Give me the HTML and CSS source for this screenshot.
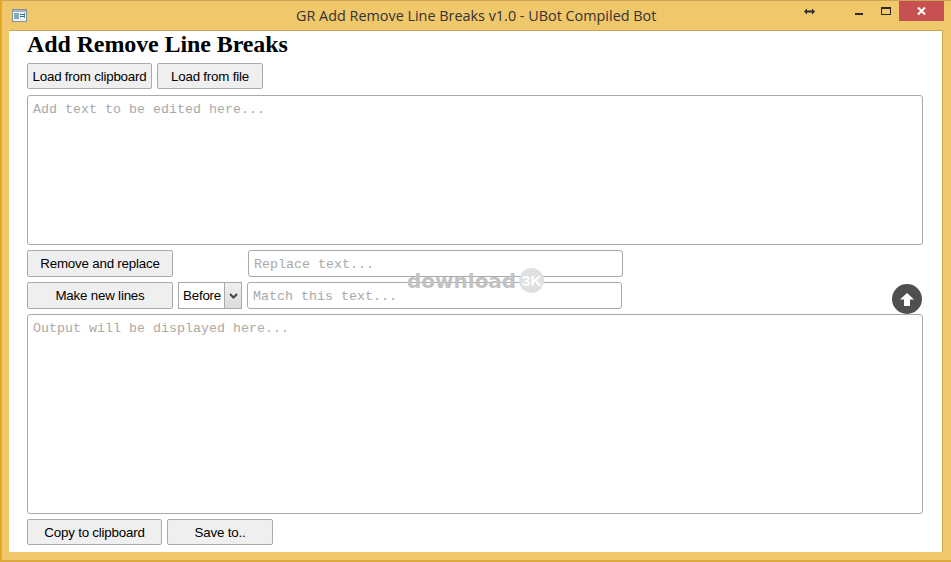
FILE: index.html
```html
<!DOCTYPE html>
<html lang="en">
<head>
    <meta charset="UTF-8">
    <title>GR Add Remove Line Breaks v1.0 - UBot Compiled Bot</title>
    <link rel="stylesheet" href="styles.css">
</head>
<body>
    <div class="window">
        <div class="titlebar">
            <svg class="app-icon" width="15" height="13" viewBox="0 0 15 13">
                <rect x="0.5" y="0.5" width="14" height="12" fill="#eef2f6" stroke="#8b8f98"/>
                <rect x="1" y="1" width="13" height="2" fill="#9fb2c8"/>
                <rect x="2" y="4" width="5" height="6" fill="#7fb0ba"/>
                <rect x="8" y="5" width="5" height="1" fill="#56606e"/>
                <rect x="8" y="7" width="5" height="1" fill="#56606e"/>
                <rect x="12" y="4" width="1" height="5" fill="#3f9a9a"/>
            </svg>
            <div class="title">GR Add Remove Line Breaks v1.0 - UBot Compiled Bot</div>
            <div class="win-controls">
                <svg class="resize-icon" width="11" height="7" viewBox="0 0 11 7">
                    <path d="M0 3.5 L3 0.5 V2.5 H8 V0.5 L11 3.5 L8 6.5 V4.5 H3 V6.5 Z" fill="#2b2b2b"/>
                </svg>
                <span class="min-btn"></span>
                <span class="max-btn"></span>
                <span class="close-btn">
                    <svg width="9" height="8" viewBox="0 0 9 8">
                        <path d="M1 0.5 L8 7.5 M8 0.5 L1 7.5" stroke="#fff" stroke-width="2" fill="none"/>
                    </svg>
                </span>
            </div>
        </div>
        <div class="client">
            <h1>Add Remove Line Breaks</h1>
            <div class="row row-top">
                <button class="btn btn-load-clip">Load from clipboard</button>
                <button class="btn btn-load-file">Load from file</button>
            </div>
            <textarea class="box box-input" placeholder="Add text to be edited here..."></textarea>
            <div class="row row-replace">
                <button class="btn btn-wide">Remove and replace</button>
                <input class="field field-replace" type="text" placeholder="Replace text...">
            </div>
            <div class="row row-match">
                <button class="btn btn-wide">Make new lines</button>
                <div class="select">
                    <span class="select-value">Before</span>
                    <span class="select-arrow">
                        <svg width="9" height="6" viewBox="0 0 9 6">
                            <path d="M1 1 L4.5 4.5 L8 1" stroke="#444" stroke-width="2" fill="none"/>
                        </svg>
                    </span>
                </div>
                <input class="field" type="text" placeholder="Match this text...">
            </div>
            <textarea class="box box-output" placeholder="Output will be displayed here..."></textarea>
            <div class="row row-bottom">
                <button class="btn btn-copy">Copy to clipboard</button>
                <button class="btn btn-save">Save to..</button>
            </div>
            <div class="watermark">
                <span class="watermark-text">download</span>
                <span class="watermark-badge">3K</span>
            </div>
            <div class="up-button">
                <svg width="14" height="13" viewBox="0 0 14 13">
                    <path d="M7 0 L14 6.5 H10 V13 H4 V6.5 H0 Z" fill="#fff"/>
                </svg>
            </div>
        </div>
    </div>
</body>
</html>
```

FILE: styles.css
```css
* {
    box-sizing: border-box;
}
html, body {
    margin: 0;
    padding: 0;
}
body {
    width: 951px;
    height: 562px;
    overflow: hidden;
    background: #fff;
    font-family: "Liberation Sans", Arial, sans-serif;
}
.window {
    width: 951px;
    height: 562px;
    padding: 0 8px 8px 7px;
    background: #f0c76a;
    border-top: 1px solid #c9a656;
    border-left: 2px solid #e3a925;
    border-bottom: 2px solid #d9a93f;
    display: flex;
    flex-direction: column;
}
.titlebar {
    height: 29px;
    flex: none;
    display: flex;
    align-items: center;
    position: relative;
}
.app-icon {
    margin: 0 0 0 3px;
}
.title {
    position: absolute;
    left: 287px;
    top: 5px;
    font-family: "Open Sans", "Liberation Sans", sans-serif;
    font-size: 14.4px;
    line-height: 20px;
    color: #333;
    white-space: nowrap;
}
.win-controls {
    margin-left: auto;
    height: 100%;
    display: flex;
    align-items: flex-start;
    margin-right: -1px;
}
.resize-icon {
    margin: 7px 40px 0 0;
}
.min-btn {
    width: 8px;
    height: 2px;
    margin: 12px 18px 0 0;
    background: #2b2b2b;
}
.max-btn {
    width: 10px;
    height: 8px;
    margin: 6px 8px 0 0;
    border: 1px solid #2b2b2b;
    border-top-width: 2px;
}
.close-btn {
    width: 45px;
    height: 20px;
    background: #c75050;
    display: flex;
    align-items: center;
    justify-content: center;
}
.client {
    flex: 1;
    position: relative;
    background: #fff;
    border-top: 1px solid #c9a656;
    border-right: 1px solid #c9a656;
    padding: 0 0 0 18px;
    display: flex;
    flex-direction: column;
    align-items: flex-start;
}
h1 {
    margin: 0;
    height: 32px;
    font-family: "Liberation Serif", "Times New Roman", serif;
    font-size: 24px;
    line-height: 26px;
    font-weight: bold;
    letter-spacing: -0.1px;
    color: #000;
}
.row {
    display: flex;
    flex: none;
}
.btn {
    height: 26px;
    padding: 0;
    background: #efefef;
    border: 1px solid #ababab;
    border-radius: 2px;
    font-family: "Liberation Sans", Arial, sans-serif;
    font-size: 13.33px;
    letter-spacing: -0.2px;
    color: #000;
    cursor: pointer;
}
.row-top {
    gap: 5px;
}
.btn-load-clip {
    width: 125px;
}
.btn-load-file {
    width: 106px;
}
.btn-wide {
    width: 146px;
    height: 27px;
}
.box {
    display: block;
    flex: none;
    width: 896px;
    margin: 6px 0 5px;
    padding: 6px 5px 5px;
    border: 1px solid #a9a9a9;
    border-radius: 3px;
    resize: none;
    outline: none;
    font-family: "Liberation Mono", "Courier New", monospace;
    font-size: 13.33px;
    line-height: 15px;
}
.box-input {
    height: 150px;
}
.box-output {
    height: 200px;
    margin-top: 5px;
}
.box::placeholder, .field::placeholder {
    color: #a9a9a9;
    opacity: 1;
}
.box-output::placeholder {
    color: #aea8a2;
}
.field {
    width: 375px;
    height: 27px;
    padding: 2px 5px 0;
    border: 1px solid #a9a9a9;
    border-radius: 3px;
    outline: none;
    font-family: "Liberation Mono", "Courier New", monospace;
    font-size: 13.33px;
}
.row-replace {
    height: 27px;
}
.field-replace {
    margin-left: 75px;
}
.row-match {
    height: 27px;
    margin-top: 5px;
    gap: 5px;
}
.select {
    width: 64px;
    height: 27px;
    display: flex;
    border: 1px solid #a9a9a9;
    font-size: 13.33px;
    letter-spacing: -0.2px;
}
.select-value {
    flex: 1;
    padding-left: 4px;
    line-height: 25px;
    color: #000;
}
.select-arrow {
    width: 17px;
    display: flex;
    align-items: center;
    justify-content: center;
    background: linear-gradient(#f0f0f0, #dcdcdc);
    border-left: 1px solid #a9a9a9;
}
.row-bottom {
    gap: 5px;
}
.btn-copy {
    width: 135px;
}
.btn-save {
    width: 106px;
}
.watermark {
    position: absolute;
    left: 398px;
    top: 237px;
    display: flex;
    align-items: center;
    gap: 3px;
    pointer-events: none;
}
.watermark-text {
    font-family: "DejaVu Sans", sans-serif;
    font-size: 20px;
    font-weight: bold;
    color: #c2c2c2;
}
.watermark-badge {
    width: 25px;
    height: 25px;
    border-radius: 50%;
    background: #e0e0e0;
    color: #fff;
    font-size: 15px;
    font-weight: bold;
    line-height: 25px;
    text-align: center;
}
.up-button {
    position: absolute;
    left: 883px;
    top: 253px;
    width: 30px;
    height: 30px;
    border-radius: 50%;
    background: #4f4f4f;
    display: flex;
    align-items: center;
    justify-content: center;
}
```
